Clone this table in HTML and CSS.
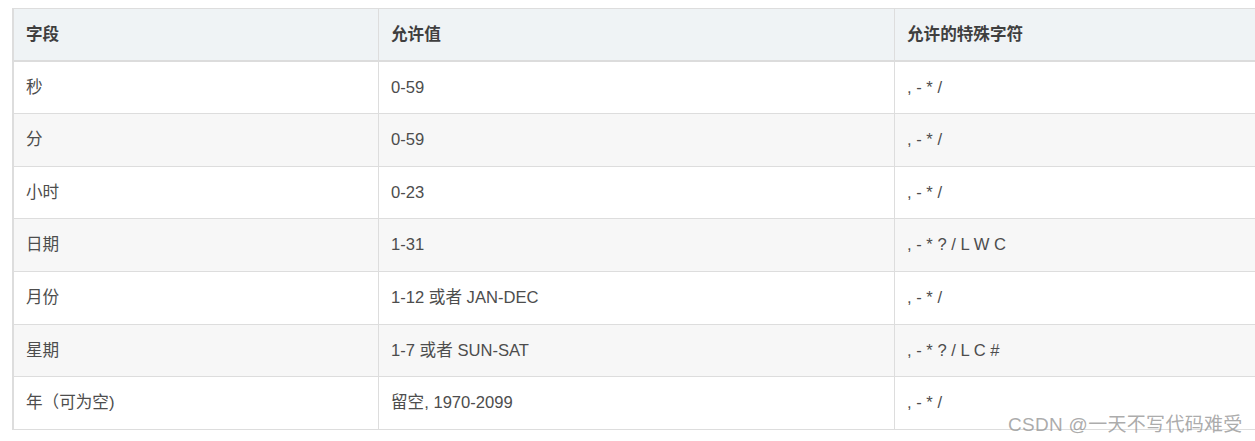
FILE: index.html
```html
<!DOCTYPE html>
<html lang="zh">
<head>
<meta charset="utf-8">
<title>Cron 字段</title>
<link rel="stylesheet" href="styles.css">
</head>
<body>
<div class="wrap">
<table class="cron">
  <thead>
    <tr><th class="c1">字段</th><th class="c2">允许值</th><th class="c3">允许的特殊字符</th></tr>
  </thead>
  <tbody>
    <tr><td>秒</td><td>0-59</td><td>, - * /</td></tr>
    <tr><td>分</td><td>0-59</td><td>, - * /</td></tr>
    <tr><td>小时</td><td>0-23</td><td>, - * /</td></tr>
    <tr><td>日期</td><td>1-31</td><td>, - * ? / L W C</td></tr>
    <tr><td>月份</td><td>1-12 或者 JAN-DEC</td><td>, - * /</td></tr>
    <tr><td>星期</td><td>1-7 或者 SUN-SAT</td><td>, - * ? / L C #</td></tr>
    <tr><td>年（可为空)</td><td>留空, 1970-2099</td><td>, - * /</td></tr>
  </tbody>
</table>
<div class="mark">CSDN @一天不写代码难受</div>
</div>
</body>
</html>
```
FILE: styles.css
```css
html, body {
  margin: 0;
  padding: 0;
  background: #fff;
  overflow: hidden;
}
body {
  font-family: "Liberation Sans", "Noto Sans CJK SC", sans-serif;
  font-size: 16.6px;
  color: #4d4d4d;
}
.wrap {
  position: relative;
  padding: 8px 0 0 12px;
  width: 1300px;
  height: 433px;
}
.cron {
  border-collapse: collapse;
  width: 1260px;
  table-layout: fixed;
  border-left: 2px solid #dddddd;
  border-top: 1px solid #dddddd;
}
.cron th, .cron td {
  border: 1px solid #dddddd;
  text-align: left;
  padding: 14px 12px;
  line-height: 23.6px;
  vertical-align: middle;
  white-space: nowrap;
}
.cron th {
  background: #eff3f5;
  font-weight: bold;
  color: #3f3f3f;
  border-bottom: 2px solid #dcdcdc;
  padding: 14px 12px 13px;
}
.cron .c1 { width: 340px; }
.cron .c2 { width: 491px; }
.cron tbody tr:nth-child(even) td { background: #f7f7f7; }
.mark {
  position: absolute;
  left: 1008px;
  top: 409px;
  font-size: 19px;
  color: rgba(150, 150, 150, 0.8);
  letter-spacing: 0.3px;
  white-space: nowrap;
}
```
